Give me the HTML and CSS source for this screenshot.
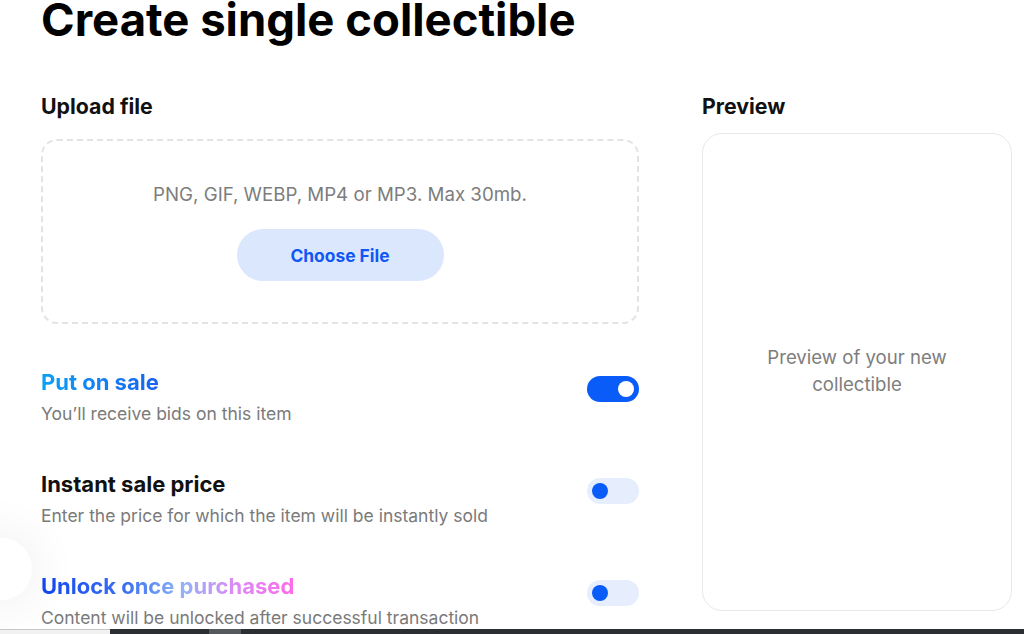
FILE: index.html
```html
<!DOCTYPE html>
<html lang="en">
<head>
<meta charset="utf-8">
<title>Create single collectible</title>
<link rel="stylesheet" href="styles.css">
</head>
<body>
<main class="page">
  <h1 class="title">Create single collectible</h1>
  <div class="layout">
    <section class="form">
      <h2 class="label">Upload file</h2>
      <div class="dropzone">
        <p class="dropzone-hint">PNG, GIF, WEBP, MP4 or MP3. Max 30mb.</p>
        <button class="choose-btn" type="button">Choose File</button>
      </div>

      <div class="option">
        <div class="option-text">
          <h3 class="option-title grad-blue">Put on sale</h3>
          <p class="option-desc">You’ll receive bids on this item</p>
        </div>
        <span class="toggle on"><span class="knob"></span></span>
      </div>

      <div class="option">
        <div class="option-text">
          <h3 class="option-title">Instant sale price</h3>
          <p class="option-desc">Enter the price for which the item will be instantly sold</p>
        </div>
        <span class="toggle"><span class="knob"></span></span>
      </div>

      <div class="option">
        <div class="option-text">
          <h3 class="option-title grad-pink">Unlock once purchased</h3>
          <p class="option-desc">Content will be unlocked after successful transaction</p>
        </div>
        <span class="toggle"><span class="knob"></span></span>
      </div>
    </section>

    <aside class="preview">
      <h2 class="label">Preview</h2>
      <div class="preview-card">
        <p class="preview-text">Preview of your new collectible</p>
      </div>
    </aside>
  </div>
</main>
<div class="float-circle"></div>
<div class="bottom-bar">
  <span class="bar-light"></span>
  <span class="bar-dark"></span>
  <span class="bar-mid"></span>
  <span class="bar-dark grow"></span>
</div>
</body>
</html>
```

FILE: styles.css
```css
* { box-sizing: border-box; }
html, body { margin: 0; padding: 0; background: #ffffff; }
body {
  font-family: Inter, "Noto Sans", "Liberation Sans", sans-serif;
  color: #111111;
  overflow: hidden;
  height: 634px;
}
.page {
  padding: 0 0 0 41px;
}
.title {
  margin: 0;
  font-size: 45.5px;
  line-height: 40px;
  font-weight: 700;
  color: #000;
  white-space: nowrap;
}
.layout {
  display: flex;
  gap: 63px;
  margin-top: 54px;
}
.form { width: 598px; }
.preview { width: 310px; }
.label {
  margin: 0;
  font-size: 21.3px;
  line-height: 24px;
  font-weight: 700;
  color: #111;
}
.dropzone {
  margin-top: 21px;
  height: 185px;
  border: 2px dashed #e3e3e3;
  border-radius: 16px;
  display: flex;
  flex-direction: column;
  align-items: center;
  padding-top: 42px;
}
.dropzone-hint {
  margin: 0;
  font-size: 18.7px;
  line-height: 24px;
  color: #7d7d7d;
}
.choose-btn {
  margin-top: 22px;
  width: 207px;
  height: 52px;
  border: none;
  border-radius: 26px;
  background: #dbe7fd;
  color: #1257f5;
  font-family: inherit;
  font-size: 17.4px;
  font-weight: 700;
}
.option {
  display: flex;
  justify-content: space-between;
  align-items: flex-start;
  margin-top: 46px;
}
.option-title {
  margin: 0;
  font-size: 22px;
  line-height: 24px;
  font-weight: 700;
  color: #111;
}
.grad-blue {
  background: linear-gradient(90deg, #0aa0f6 0%, #1a62f2 100%);
  -webkit-background-clip: text;
  background-clip: text;
  color: transparent;
  display: inline-block;
}
.grad-pink {
  background: linear-gradient(90deg, #1246f0 0%, #3f73f2 35%, #8eb4f8 55%, #d88cf5 75%, #ff6ae8 100%);
  -webkit-background-clip: text;
  background-clip: text;
  color: transparent;
  display: inline-block;
}
.option-desc {
  margin: 8px 0 0 0;
  font-size: 17.5px;
  line-height: 24px;
  color: #7a7a7a;
}
.toggle {
  margin-top: 6px;
  width: 52px;
  height: 26px;
  border-radius: 13px;
  background: #e6eefd;
  display: flex;
  align-items: center;
  padding: 0 5px;
  flex-shrink: 0;
}
.toggle .knob {
  width: 16px;
  height: 16px;
  border-radius: 50%;
  background: #0a5cf8;
}
.toggle.on {
  background: #0a5cf8;
  justify-content: flex-end;
}
.toggle.on .knob { background: #ffffff; }
.preview-card {
  margin-top: 15px;
  height: 478px;
  border: 1px solid #e8e8e8;
  border-radius: 20px;
  display: flex;
  align-items: center;
  justify-content: center;
  padding-bottom: 2px;
}
.preview-text {
  margin: 0;
  width: 200px;
  text-align: center;
  font-size: 18.6px;
  line-height: 27px;
  color: #7d7d7d;
}
.float-circle {
  position: absolute;
  left: -30px;
  top: 538px;
  width: 62px;
  height: 62px;
  border-radius: 50%;
  background: #fff;
  box-shadow: 0 0 40px 14px rgba(0,0,0,0.04);
}
.bottom-bar {
  position: fixed;
  left: 0;
  right: 0;
  bottom: 0;
  height: 5px;
  display: flex;
}
.bar-light { width: 110px; background: #f1f1f1; border-top: 1px solid #c8c8c8; }
.bar-dark { width: 99px; background: #2b2e33; }
.bar-mid { width: 32px; background: #55585c; }
.bar-dark.grow { flex: 1; }
```
